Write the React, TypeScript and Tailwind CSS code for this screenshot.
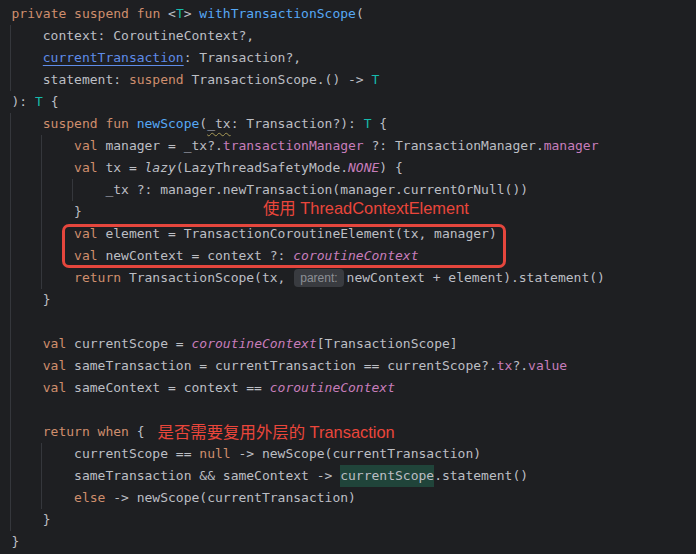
import { ReactNode } from "react";

type Tok = [string, string?];

interface Line {
  indent: number;
  guides: number[];
  toks: Tok[];
  extra?: ReactNode;
}

const kw = "text-[#cf8e6d]";
const fn = "text-[#56a8f5]";
const tp = "text-[#16baac]";
const prop = "text-[#c77dbb]";
const propI = "text-[#c77dbb] italic";

const note =
  "leading-none font-['Liberation_Sans','Noto_Sans_CJK_SC',sans-serif] text-[16.4px] text-[#ea463b]";

const lines: Line[] = [
  {
    indent: 0,
    guides: [],
    toks: [["private suspend fun ", kw], ["<"], ["T", tp], ["> "], ["withTransactionScope", fn], ["("]],
  },
  { indent: 1, guides: [0], toks: [["context: CoroutineContext?,"]] },
  {
    indent: 1,
    guides: [0],
    toks: [["currentTransaction", "text-[#5f8ce8] underline underline-offset-[3px]"], [": Transaction?,"]],
  },
  {
    indent: 1,
    guides: [0],
    toks: [["statement: "], ["suspend", kw], [" TransactionScope.() -> "], ["T", tp]],
  },
  { indent: 0, guides: [], toks: [["): "], ["T", tp], [" {"]] },
  {
    indent: 1,
    guides: [0],
    toks: [
      ["suspend fun ", kw],
      ["newScope", fn],
      ["("],
      ["_tx", "underline decoration-wavy decoration-1 decoration-[#a89a55] underline-offset-[4px]"],
      [": Transaction?): "],
      ["T", tp],
      [" {"],
    ],
  },
  {
    indent: 2,
    guides: [0, 1],
    toks: [
      ["val", kw],
      [" manager = _tx?."],
      ["transactionManager", prop],
      [" ?: TransactionManager."],
      ["manager", prop],
    ],
  },
  {
    indent: 2,
    guides: [0, 1],
    toks: [["val", kw], [" tx = "], ["lazy", "italic"], ["(LazyThreadSafetyMode."], ["NONE", propI], [") {"]],
  },
  {
    indent: 3,
    guides: [0, 1, 2],
    toks: [["_tx ?: manager.newTransaction(manager.currentOrNull())"]],
  },
  {
    indent: 2,
    guides: [0, 1],
    toks: [["}"]],
    extra: <span className={`ml-[181px] mb-[7px] ${note}`}>使用 ThreadContextElement</span>,
  },
  {
    indent: 2,
    guides: [0, 1],
    toks: [["val", kw], [" element = TransactionCoroutineElement(tx, manager)"]],
  },
  {
    indent: 2,
    guides: [0, 1],
    toks: [["val", kw], [" newContext = context ?: "], ["coroutineContext", propI]],
  },
  {
    indent: 2,
    guides: [0, 1],
    toks: [["return", kw], [" TransactionScope(tx, "], ["@parent"], ["newContext + element).statement()"]],
  },
  { indent: 1, guides: [0], toks: [["}"]] },
  { indent: 1, guides: [0], toks: [] },
  {
    indent: 1,
    guides: [0],
    toks: [["val", kw], [" currentScope = "], ["coroutineContext", propI], ["[TransactionScope]"]],
  },
  {
    indent: 1,
    guides: [0],
    toks: [
      ["val", kw],
      [" sameTransaction = currentTransaction == currentScope?."],
      ["tx", prop],
      ["?."],
      ["value", prop],
    ],
  },
  {
    indent: 1,
    guides: [0],
    toks: [["val", kw], [" sameContext = context == "], ["coroutineContext", propI]],
  },
  { indent: 1, guides: [0], toks: [] },
  {
    indent: 1,
    guides: [0],
    toks: [["return when", kw], [" {"]],
    extra: <span className={`ml-[13px] ${note}`}>是否需要复用外层的 Transaction</span>,
  },
  {
    indent: 2,
    guides: [0, 1],
    toks: [["currentScope == "], ["null", kw], [" -> newScope(currentTransaction)"]],
  },
  {
    indent: 2,
    guides: [0, 1],
    toks: [["sameTransaction && sameContext -> "], ["@caret"], [".statement()"]],
  },
  {
    indent: 2,
    guides: [0, 1],
    toks: [["else", kw], [" -> newScope(currentTransaction)"]],
  },
  { indent: 1, guides: [0], toks: [["}"]] },
  { indent: 0, guides: [], toks: [["}"]] },
];

const Token = ({ tok }: { tok: Tok }) => {
  const [text, cls] = tok;
  if (text === "@parent") {
    return (
      <span className="ml-[1px] mr-[3px] flex h-[18px] items-center rounded-[4px] bg-[#393b40] px-[6px] font-['Liberation_Sans',sans-serif] text-[12px] leading-none text-[#8c8f95]">
        parent:
      </span>
    );
  }
  if (text === "@caret") {
    return <span className="flex items-center self-stretch bg-[#20443a]">currentScope</span>;
  }
  return <span className={cls}>{text}</span>;
};

const App = () => {
  return (
    <div className="relative h-[554px] w-[696px] overflow-hidden bg-[#1e1f22] pl-[11.5px] pt-[3px] font-['DejaVu_Sans_Mono',monospace] text-[13px] text-[#bcbec4]">
      {lines.map((line, i) => (
        <div key={i} className="flex h-[22px] items-center whitespace-pre">
          {Array.from({ length: line.indent }).map((_, lvl) =>
            line.guides.includes(lvl) ? (
              <span key={lvl} className="-ml-[2px] mr-[2px] w-[4ch] self-stretch border-l border-[#35373c]" />
            ) : (
              <span key={lvl} className="w-[4ch] self-stretch" />
            )
          )}
          {line.toks.map((tok, j) => (
            <Token key={j} tok={tok} />
          ))}
          {line.extra}
        </div>
      ))}
      {/* red box around the two highlighted lines */}
      <div className="absolute left-[62px] top-[224px] h-[44px] w-[444px] rounded-[7px] border-[3px] border-[#e5463d]" />
    </div>
  );
};

export default App;
